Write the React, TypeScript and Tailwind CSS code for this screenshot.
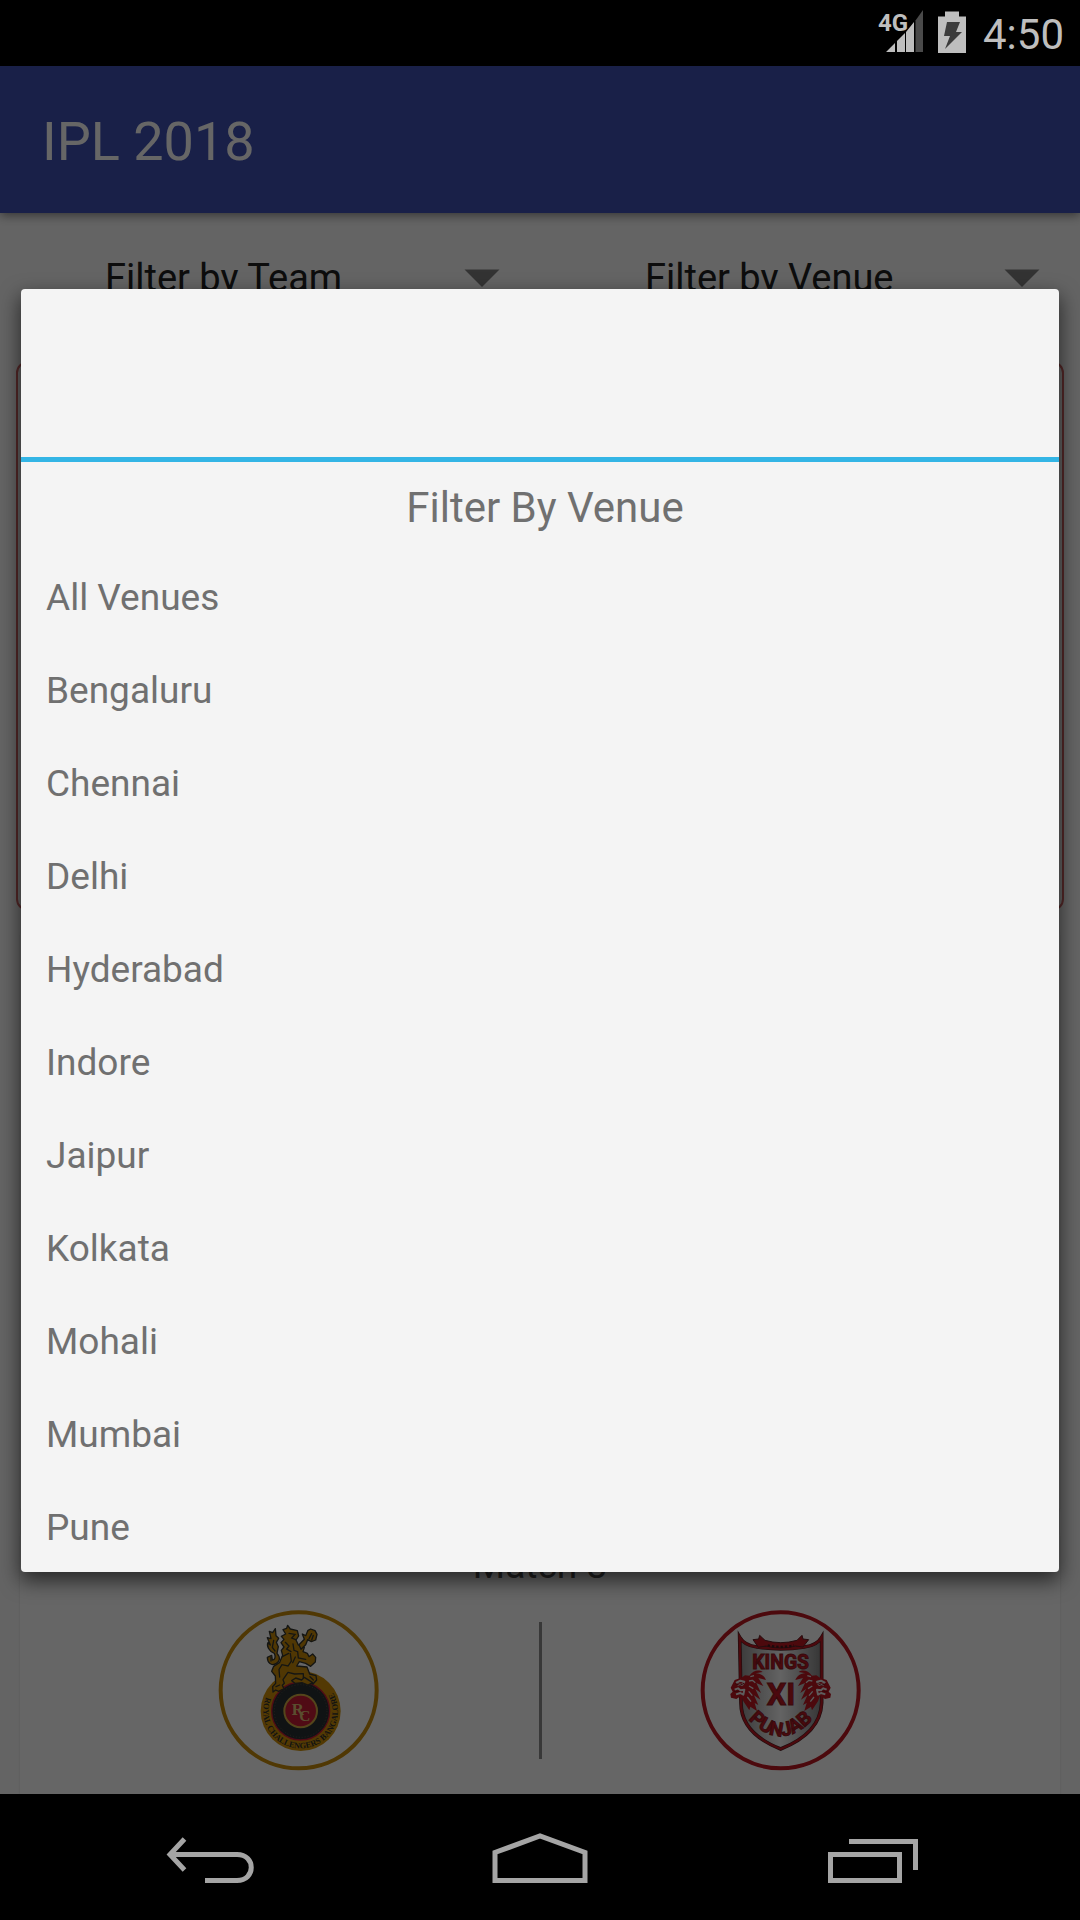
import React from 'react';

const venues = ['All Venues', 'Bengaluru', 'Chennai', 'Delhi', 'Hyderabad', 'Indore', 'Jaipur', 'Kolkata', 'Mohali', 'Mumbai', 'Pune'];

function StatusBar() {
  return (
    <header className="flex h-[66px] shrink-0 items-center justify-end bg-black pr-4 text-[#bebebe]">
      <svg className="mr-[14px] h-[66px] w-[48px]" viewBox="876 0 48 66" role="img" aria-label="4G signal">
        <text x="878" y="31" fontSize="24" fontWeight="700" fill="#bebebe" fontFamily="'Liberation Sans Narrow', Roboto, sans-serif">4G</text>
        <path d="M886 52 895 43V52Z M897 41 905 33V52H897Z M906 32 914 22V52H906Z" fill="#bebebe" />
        <path d="M915.500 20.500 923 10V52H915.500Z" fill="#4a4a4a" />
      </svg>
      <svg className="mr-[17px] h-[66px] w-[28px]" viewBox="938 0 28 66" role="img" aria-label="Battery charging">
        <path d="M945 11.500H959V16.500H966V53H938V16.500H945Z" fill="#bebebe" />
        <path d="M947 22H960L956 32H962L945 49L950 36H944Z" fill="#3c3c3c" />
      </svg>
      <time className="pt-[3px] text-[42px] leading-none">4:50</time>
    </header>
  );
}

function Spinner({ id, label }: { id: string; label: string }) {
  return (
    <div className="flex flex-1 items-center pr-10">
      <select id={id} aria-label={label} className="min-w-0 flex-1 appearance-none pl-[105px] text-[38px] leading-[50px] text-[#222222]">
        <option>{label}</option>
      </select>
      <svg className="h-[18px] w-[36px]" viewBox="0 0 36 18" aria-hidden="true">
        <path d="M0.500 0.500H35.500L18 18Z" fill="#808080" />
      </svg>
    </div>
  );
}

function RoyalLogo() {
  return (
    <svg className="size-[200px]" viewBox="0 0 600 600" role="img" aria-label="Royal Challengers Bangalore">
      <defs>
        <path id="rcb-ring" d="M201 321A112 112 0 1 0 384 284" />
      </defs>
      <circle cx="299" cy="301" r="234" fill="none" stroke="#c88c0c" strokeWidth="12" />
      <circle cx="305" cy="363" r="120" fill="#cf9008" />
      <circle cx="305" cy="363" r="87" fill="#2a3033" stroke="#c81d35" strokeWidth="4" />
      <circle cx="305" cy="363" r="79" fill="none" stroke="#65604c" strokeWidth="2" strokeDasharray="3 6" />
      <circle cx="305" cy="363" r="49" fill="#c81d35" stroke="#d3ad45" strokeWidth="6" />
      <g fill="#e0c277" fontFamily="Liberation Serif, serif" fontWeight="700">
        <text x="278" y="374" fontSize="50">R</text>
        <text x="301" y="393" fontSize="46">C</text>
      </g>
      <text fill="#30302b" fontFamily="Liberation Serif, serif" fontSize="25" fontWeight="700">
        <textPath href="#rcb-ring">ROYAL CHALLENGERS BANGALORE</textPath>
      </text>
      <g fill="#c98b08" stroke="#34352f" strokeWidth="4" strokeLinejoin="round">
        <path d="M232 220C217 230 205 218 205 202L218 196 220 210C229 209 230 200 226 190C210 184 202 168 207 158L214 165 205 143 216 146 211 124 221 128 229 116 231 137 239 145 232 157 238 170 234 190C247 205 240 216 232 220Z" />
        <path d="M252 119 263 115 266 106 274 117 295 122 299 138 291 150 298 165 316 172 312 185 325 190 330 200 341 192 350 202 349 216 335 229 320 220 301 215 293 228 324 231 332 252 351 257 353 270 342 282 324 276 313 264 313 251 287 252 267 247 252 269 256 280 250 286 255 296 239 304 230 300 222 306 221 290 230 280 229 258 218 244 224 229 242 217 251 196 247 181 255 171 246 158 255 148 247 139 260 132Z" />
        <path d="M300 164 316 148 310 132 320 137 327 121 335 117 348 122 354 133 350 150 337 155 326 149 320 164 306 178Z" />
        <path d="M278 272 290 264 308 270 316 262 341 278 327 285 309 278 288 280Z" />
      </g>
      <path d="M270 130 288 133 278 144 290 149M259 157 270 168 263 177 276 185M282 162 285 181 296 185 298 204 320 208M274 191 277 213 267 228 249 224 240 238 242 261M250 200 269 190M289 201 281 218M338 131 330 146M343 136 338 150M216 202 216 213M224 151 220 172 228 183M231 290 242 285M333 260 343 270" fill="none" stroke="#34352f" strokeWidth="4" strokeLinecap="round" />
    </svg>
  );
}

function LionHead() {
  return (
    <g>
      <path d="M181 263 192 256 205 257C216 242 232 237 245 246L224 250C239 250 250 258 255 270L232 264 247 288 226 279 240 309 223 297 238 329 219 316 232 345 221 339 228 363 208 350 205 361 187 334 181 317 166 327 150 323 148 312 155 305 149 293 161 270Z" fill="#bd1722" />
      <path d="M165 279 178 272 190 275 184 284 170 284M161 299 171 295 178 301 190 299 187 314 178 309 165 313" fill="none" stroke="#e9e9e9" strokeWidth="6" strokeLinejoin="round" />
      <path d="M204 273 214 271 223 278M204 288 217 296M203 304 214 317M199 321 210 335M208 260 219 257" fill="none" stroke="#e0e0e0" strokeWidth="4" strokeLinejoin="round" />
      <path d="M163 281 177 286 189 280M158 304 175 304" fill="none" stroke="#8b1018" strokeWidth="3" />
    </g>
  );
}

function KingsLogo() {
  return (
    <svg className="size-[200px]" viewBox="0 0 600 600" role="img" aria-label="Kings XI Punjab">
      <defs>
        <linearGradient id="shield">
          <stop offset="0" stopColor="#959595" />
          <stop offset=".5" stopColor="#f8f8f8" />
          <stop offset="1" stopColor="#878787" />
        </linearGradient>
        <path id="punjab-curve" d="M205 391Q299 486 393 391" />
      </defs>
      <circle cx="299" cy="301" r="234" fill="none" stroke="#bd1722" strokeWidth="12" />
      <path d="M176 142Q190 166 228 171Q299 182 370 171Q408 166 422 142V339Q418 430 299 477Q180 430 180 339Z" fill="url(#shield)" stroke="#4d2023" strokeWidth="11" />
      <path d="M176 142Q190 166 228 171Q299 182 370 171Q408 166 422 142V339Q418 430 299 477Q180 430 180 339Z" fill="none" stroke="#bd1722" strokeWidth="7" />
      <path d="M216 149 233 147 236 136 252 151Q299 165 348 151L363 136 366 147 383 149 366 171 344 168Q299 180 255 168L232 172Z" fill="#bd1722" stroke="#5c2024" strokeWidth="3" />
      <path d="M260 166Q299 175 339 166" fill="none" stroke="#44191c" strokeWidth="7" strokeDasharray="7 6" />
      <LionHead />
      <g transform="matrix(-1 0 0 1 598 0)"><LionHead /></g>
      <g fill="#bd1722" stroke="#8a1a22" strokeWidth="3" fontFamily="'Liberation Sans Narrow', Roboto, sans-serif" fontWeight="700" textAnchor="middle">
        <text x="299" y="237" fontSize="58">KINGS</text>
        <text x="300" y="346" fontSize="92">XI</text>
        <text fontSize="58"><textPath href="#punjab-curve" startOffset="50%">PUNJAB</textPath></text>
      </g>
    </svg>
  );
}

function MatchList() {
  return (
    <main className="flex-1 overflow-hidden bg-[#fafafa]">
      <div className="flex pt-10">
        <Spinner id="team-filter" label="Filter by Team" />
        <Spinner id="venue-filter" label="Filter by Venue" />
      </div>
      <section className="mx-4 mt-[58px] h-[550px] rounded-xl border-2 border-[#d46464]" />
      <section className="mx-5 mt-5 h-[580px] rounded-sm bg-white shadow" />
      <section className="mx-5 mt-[21px] rounded-sm bg-white pt-[10px] shadow">
        <h2 className="text-center text-[37px] leading-[48px] text-[#555555]">Match 8</h2>
        <div className="grid grid-cols-[1fr_3px_1fr] items-center px-10 pb-20">
          <div className="flex justify-center"><RoyalLogo /></div>
          <div className="h-[137px] bg-[#8c8c8c]" />
          <div className="flex justify-center"><KingsLogo /></div>
        </div>
      </section>
    </main>
  );
}

function VenueDialog() {
  return (
    <div className="absolute inset-0 flex items-center bg-black/60 px-[21px]">
      <div role="dialog" aria-modal="true" aria-labelledby="dialog-title" className="flex-1 rounded-[4px] bg-[#f4f4f4] text-[#707070] shadow-[0_8px_20px_1px_rgba(0,0,0,0.6)]">
        <div className="h-[168px]" />
        <div className="h-[5px] bg-[#33b5e5]" />
        <h2 id="dialog-title" className="pl-[10px] pt-[21px] text-center text-[42px] leading-[49px]">Filter By Venue</h2>
        <ul className="pt-[17px]">
          {venues.map((venue) => (
            <li key={venue}>
              <button className="block w-full px-[25px] pt-1 text-left text-[37px] leading-[89px]">{venue}</button>
            </li>
          ))}
        </ul>
      </div>
    </div>
  );
}

function NavigationBar() {
  return (
    <nav className="flex h-[126px] shrink-0 items-center justify-center bg-black">
      <button aria-label="Back" className="flex w-[330px] justify-center">
        <svg width="96" height="60" viewBox="162 1827 96 60" fill="none" stroke="#a5a5a5" strokeWidth="5">
          <path d="M184.500 1839 170 1854.500 184.500 1870M170 1854.500H237C256 1854.500 256 1880.500 237 1880.500H205" />
        </svg>
      </button>
      <button aria-label="Home" className="flex w-[330px] justify-center">
        <svg width="100" height="60" viewBox="490 1827 100 60" fill="none" stroke="#a5a5a5" strokeWidth="5">
          <path d="M495 1880.500V1852.500L540 1836 585 1852.500V1880.500Z" />
        </svg>
      </button>
      <button aria-label="Recent apps" className="flex w-[330px] justify-center">
        <svg width="96" height="60" viewBox="822 1827 96 60" fill="none" stroke="#a5a5a5" strokeWidth="5">
          <path d="M830.500 1854.500H899.500V1880.500H830.500ZM849 1841.500H915.500V1870" />
        </svg>
      </button>
    </nav>
  );
}

export default function App() {
  return (
    <div className="flex h-screen flex-col overflow-hidden bg-black font-['Roboto',sans-serif]">
      <StatusBar />
      <div className="relative flex min-h-0 flex-1 flex-col">
        <div className="relative flex h-[147px] shrink-0 items-center bg-[#3f51b5] px-[42px] pt-1 shadow-[0_2px_10px_rgba(0,0,0,0.5)]">
          <h1 className="text-[54px] leading-[64px] text-white">IPL 2018</h1>
        </div>
        <MatchList />
        <VenueDialog />
      </div>
      <NavigationBar />
    </div>
  );
}
